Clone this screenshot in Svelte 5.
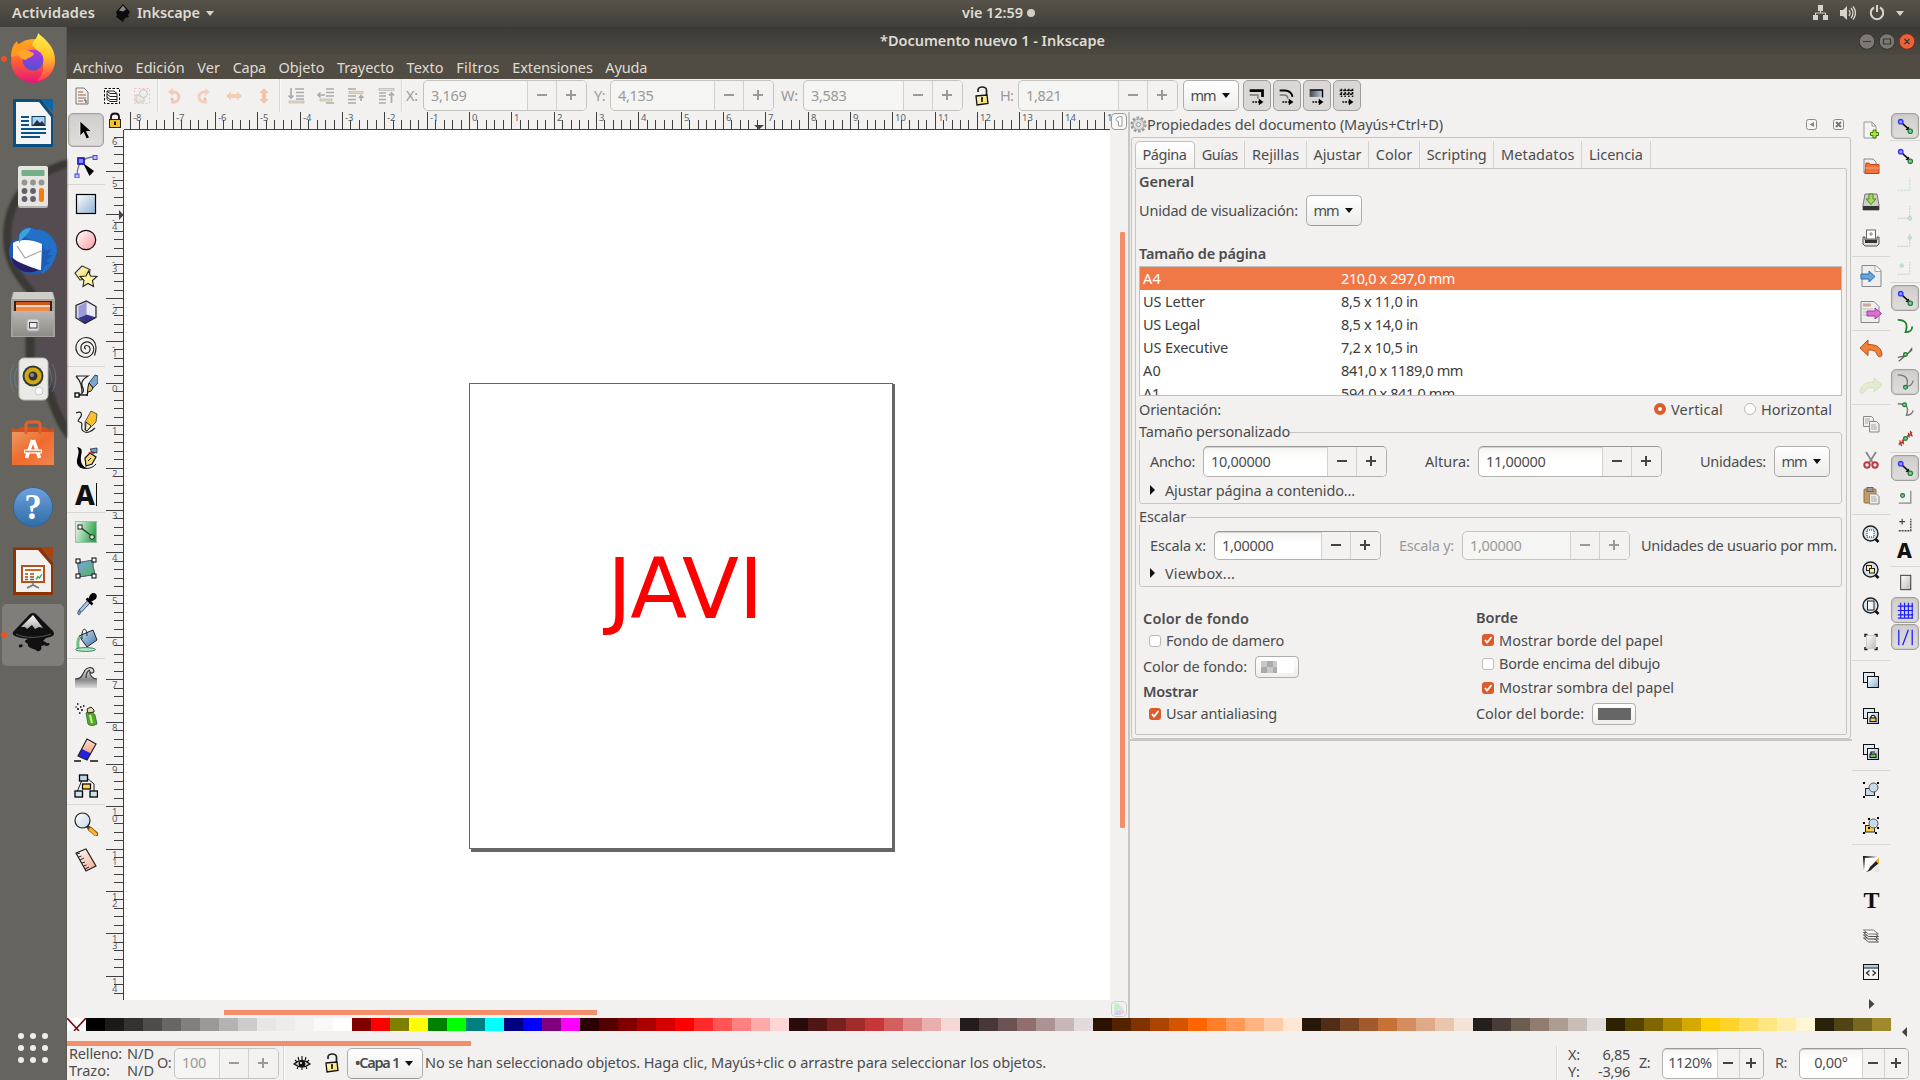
<script>
  function fit(node, width) {
    const natural = node.getBoundingClientRect().width;
    const count = [...node.textContent].length;
    node.style.letterSpacing = (width - natural) / count + 'px';
    node.style.width = width + 'px';
  }

  const menus = [['Archivo', 50], ['Edición', 49], ['Ver', 23], ['Capa', 33], ['Objeto', 46], ['Trayecto', 57], ['Texto', 37], ['Filtros', 43.5], ['Extensiones', 80.5], ['Ayuda', 42]];
  const tabs = [['Guías', 36], ['Rejillas', 47], ['Ajustar', 48], ['Color', 36.5], ['Scripting', 60], ['Metadatos', 73.5], ['Licencia', 54]];
  const sizes = [
    ['A4', 18, '210,0 x 297,0 mm', 114], ['US Letter', 62, '8,5 x 11,0 in', 77], ['US Legal', 57, '8,5 x 14,0 in', 77],
    ['US Executive', 85, '7,2 x 10,5 in', 77], ['A0', 18, '841,0 x 1189,0 mm', 122], ['A1', 17, '594,0 x 841,0 mm', 114]
  ];
  const palette = ('000000 1a1a1a 333333 4d4d4d 666666 808080 999999 b3b3b3 cccccc e6e6e6 ececec f2f2f2 f9f9f9 ffffff ' +
    '800000 ff0000 808000 ffff00 008000 00ff00 008080 00ffff 000080 0000ff 800080 ff00ff ' +
    '2b0000 550000 800000 aa0000 d40000 ff0000 ff2a2a ff5555 ff8080 ffaaaa ffd5d5 ' +
    '280b0b 501616 782121 a02c2c c83737 d35f5f de8787 e9afaf f4d7d7 241c1c 483737 6c5353 916f6f ac9393 c8b7b7 e3dbdb ' +
    '2b1100 552200 803300 aa4400 d45500 ff6600 ff7f2a ff9955 ffb380 ffccaa ffe6d5 ' +
    '28170b 502d16 784421 a05a2c c87137 d38d5f deaa87 e9c6af f4e3d7 241f1c 483e37 6c5d53 917c6f ac9d93 c8beb7 e3dedb ' +
    '2b2200 554400 806600 aa8800 d4aa00 ffcc00 ffd42a ffdd55 ffe680 ffeeaa fff6d5 28220b 504416 786721 a0892c').split(' ');

  const unit = 42.33;
  const hTicks = [];
  for (let i = -40; i <= 75; i++) hTicks.push({ x: Math.round(469 + (i * unit) / 5) + 0.5, major: i % 5 === 0, n: i === 75 ? '1' : i / 5 });
  const vTicks = [];
  for (let i = -29; i <= 72; i++) vTicks.push({ y: Math.round(383 + (i * unit) / 5) + 0.5, major: i % 5 === 0, n: i / 5 });

  const padlockOpen = '<path d="M8 8V6c.5-4 8-4 8.500 0V12" fill="none" stroke="#222" stroke-width="1.700"/><path d="M6 12l11-1 1 8.500-11 1.500z" fill="url(#gYel)" stroke="#111" stroke-width="1.300"/><path d="M12 14v4M11 14h2" stroke="#111" stroke-width="1.600"/>';
  const lens = '<circle cx="11.500" cy="11.500" r="7.500" fill="#d5e3ef" stroke="#222" stroke-width="1.400"/><path d="M16.500 17l3 3" stroke="#111" stroke-width="2.600"/>';
  const link = '<path d="M9 9l6 5.500" stroke="#111" stroke-width="1.600"/><path d="M16.500 16.500l-4.500-1 3.500-3.500z" fill="#111"/><circle cx="7" cy="7" r="2.300" fill="#99f" stroke="#33f" stroke-width="1.400"/><circle cx="17" cy="17" r="2.300" fill="#8c8" stroke="#2a8040" stroke-width="1.300"/>';
  const dup = '<rect x="4.500" y="4.500" width="11" height="10" fill="#dfeaf5" stroke="#111"/><rect x="8.500" y="8.500" width="11" height="11" fill="url(#gBlue)" stroke="#111"/>';
  const node = (x, y) => `<circle cx="${x}" cy="${y}" r="2" fill="#7c9" stroke="#1d7a2c" stroke-width="1.200"/>`;
  const toNext = '<path d="M7 18.500h7" stroke="#000" stroke-width="1.800" stroke-dasharray="2 1"/><path d="M14 15l5 3.500-5 3.500z"/>';

  const icons = {
    doc: '<path d="M6 4h8l4 4v12H6z" fill="#eee" stroke="#777"/><path d="M8 8h5M8 11h8M8 14h8M8 17h5" stroke="#c9a898" stroke-width="1.800"/><path d="M14 16h2v3" fill="none" stroke="#543"/>',
    layersel: '<rect x="4.500" y="4.500" width="15" height="15" fill="#fff" stroke="#000" stroke-dasharray="2.500 1.500"/><path d="M7 7h7l3 2.500h-7zM7 10l3 2.500h7M7 13l3 2.500h7M7 15.500l3 2h7M7 7v8.500M17 9.500v8" fill="none" stroke="#222"/>',
    groupsel: '<g opacity=".5"><rect x="4.500" y="4.500" width="15" height="15" fill="none" stroke="#e88" stroke-dasharray="2 2"/><rect x="6" y="11" width="8" height="7" fill="#e9dfc0" stroke="#999"/><circle cx="13.500" cy="9.500" r="4" fill="#e4e9ee" stroke="#999"/></g>',
    rotl: '<path d="M8 8h4a5 5 0 010 10H9" fill="none" stroke="#f0c9b8" stroke-width="3"/><path d="M6 8l5-4v8z" fill="#f0cdbd"/><circle cx="10" cy="15" r="1.500" fill="#eeb8a0"/>',
    rotr: '<path d="M16 8h-4a5 5 0 000 10h3" fill="none" stroke="#f1cfb8" stroke-width="3"/><path d="M18 8l-5-4v8z" fill="#f0d2bd"/><circle cx="13" cy="15" r="1.500" fill="#eeb8a0"/>',
    fliph: '<path d="M4 12l5-4.500v2.500h6V7.500l5 4.500-5 4.500V14H9v2.500z" fill="#f3cdb6"/>',
    flipv: '<path d="M12 4l4.500 5H14v6h2.500L12 20l-4.500-5H10V9H7.500z" fill="#f1c4aa"/>',
    low1: '<path d="M7 4v10M4.500 11.500L7 14l2.500-2.500M11 5h9M12 8.500h8M12 12h8M12 15h8" fill="none" stroke="#aaa" stroke-width="1.700"/><rect x="5" y="17" width="15" height="2" fill="#e9dfb8" stroke="#aaa" stroke-width=".6"/>',
    low2: '<path d="M12 5h8M12 8.500h8M12 12h8M12 19h8M4 11h7M6.500 8.500L4 11l2.500 2.500" fill="none" stroke="#aaa" stroke-width="1.700"/><rect x="6" y="15" width="12" height="2" fill="#e9dfb8" stroke="#aaa" stroke-width=".6"/>',
    up1: '<path d="M4 5h8M4 12h8M4 15.500h8M4 19h8M17 17v-5M15 14L17 11.500 19.500 14" fill="none" stroke="#aaa" stroke-width="1.700"/><rect x="5" y="7.500" width="14" height="2" fill="#e9dfb8" stroke="#aaa" stroke-width=".6"/>',
    up2: '<path d="M5 9h7M5 12h7M5 15.500h7M5 19h7M17.500 19V9M15 11.500L17.500 9l2.500 2.500" fill="none" stroke="#aaa" stroke-width="1.700"/><rect x="5" y="4.500" width="15" height="2" fill="#e9dfb8" stroke="#aaa" stroke-width=".6"/>',
    lockopen: padlockOpen,
    aff1: '<path d="M4 6h14v7" fill="none" stroke="#000" stroke-width="3"/><path d="M4 11h9v4" fill="none" stroke="#777" stroke-width="1.600"/>' + toNext,
    aff2: '<path d="M4 6h6a8 8 0 018 7" fill="none" stroke="#000" stroke-width="2"/><path d="M4 11h4q5 0 5 4" fill="none" stroke="#777" stroke-width="1.600"/>' + toNext,
    aff3: '<path d="M4 6h14v7H4z" fill="url(#gGrad)"/><path d="M4 5.500h14v8" fill="none" stroke="#000" stroke-width="1.500"/>' + toNext,
    aff4: '<path d="M4 6h15M4 10h15M6 4v9M10 4v9M14 4v9M18 4v9" stroke="#111" stroke-width="1.700" stroke-dasharray="2.500 1.200"/>' + toNext,

    select: '<path d="M6 3v15l3.500-3.500 3 6.500 3-1.500-3-6h5z" fill="#000" stroke="#fff" stroke-width=".7"/>',
    nodes: '<path d="M3 22C3 10 8 3 21 3" fill="none" stroke="#777" stroke-width="1.300"/><path d="M9 9l11 8-4.500 5z"/><rect x="4" y="4" width="6" height="6" fill="#88f" stroke="#11b" stroke-width="1.600"/><rect x="19" y="1.500" width="4" height="4" fill="#bbf" stroke="#44e"/><rect x="1" y="20" width="4" height="4" fill="#bbf" stroke="#44e"/>',
    rect: '<rect x="2.500" y="2.500" width="19" height="19" fill="url(#gBlue)" stroke="#000" stroke-width="1.200"/>',
    circle: '<circle cx="12" cy="12" r="9.700" fill="url(#gPink)" stroke="#111" stroke-width="1.200"/>',
    star: '<path d="M8 2l8 3.500-1 9-9 1.500L1 9z" fill="url(#gYel)" stroke="#333" stroke-width="1.100"/><path d="M14.500 7l2 5 6.500.5-4.500 4 1 6-5.500-3-5 3 1-6-4-4 6-.5z" fill="#fff3a0" stroke="#222" stroke-width="1.100"/>',
    box: '<path d="M12.500 1L22 6.500v11L11 23.500 2 18V5.500z" fill="#d8d8f2"/><path d="M12.500 3L21 7v10l-8.500-2.500z" fill="#ececfb"/><path d="M12.500 14.500L22 17.500 11 23.500 4 18z" fill="#33338a"/><path d="M4.500 6.500L12.500 2v12.500L4.500 18z" fill="#9b9bd6"/><path d="M12.500 1L22 6.500v11L11 23.500 2 18V5.500z" fill="none" stroke="#222" stroke-width="1.200"/>',
    spiral: '<path d="M12 13c-2 0-2-3.500.5-3.500s4 2 3.500 4.500-3 4-6 3-4-5-2.500-8 6-4 9-2 4 6 2.500 9.500-5.500 5.500-10 4.500-8-6-7-11S7 1.500 12 1.500c6 0 10 4.500 10 10 0 4-1 6.500-1.500 8" fill="none" stroke="#222" stroke-width="1.200"/>',
    pen: '<path d="M2 2h12c-5 3-8 6-5 12 1 3 1 5-4 7M2 2c5 6 6 10 6 18" fill="none" stroke="#222" stroke-width="1.200"/><path d="M15 9l6-8 3 1v7l-5 5z" fill="#7ba7cc" stroke="#124" stroke-width=".8"/><path d="M15 9l4 5-2 3-3 1-1 4 1-9z" fill="#e0c060" stroke="#111"/><rect x="1" y="19" width="4" height="4" fill="#fff" stroke="#000" stroke-width="1.300"/><path d="M5 21h8" stroke="#000" stroke-width="1.300"/>',
    pencil: '<path d="M2 3c6-3 7 2 3 6-3 4 3 2 3 5-2 8 4 9 7 8s4-2 6-4" fill="none" stroke="#222" stroke-width="1.200"/><path d="M17 1l6 3-1 8-9 9-2-1V12z" fill="#fbbf2d" stroke="#333" stroke-width=".8"/><path d="M12 12l5 4-4 5-1.500-1z" fill="#fff3c0" stroke="#222"/>',
    callig: '<path d="M3 1c6 1 5 4 4 9-1 7 2 11 6 12-6 2-11-2-10-8 1-5 3-9 0-13z"/><path d="M12 20l-1-8 5-5 6 4-4 7z" fill="#f5d868" stroke="#111" stroke-width="1.200"/><path d="M14 7l6 1 2-2-5-1z" fill="#d33"/><path d="M16 3l7-1v5l-5-1z" fill="#6e9cc4" stroke="#124" stroke-width=".7"/><path d="M14 15l3-3M7 21c5 3 12 1 15-3" stroke="#111" fill="none"/>',
    gradient: '<rect x="1.500" y="1.500" width="21" height="21" fill="url(#gGreen)" stroke="#9cbfa6"/><path d="M6 7l13 10" stroke="#333" stroke-width="1.300"/><rect x="4" y="5" width="4" height="4" fill="#fff" stroke="#222"/><circle cx="18" cy="17" r="2.300" fill="#cec" stroke="#222"/>',
    mesh: '<path d="M4 5c6 3 9-2 16 0-3 6 2 9 0 15-6-2-10 2-16 0 2-5-1-9 0-15z" fill="url(#gMesh)" stroke="#456"/><rect x="2" y="3" width="4" height="4" fill="#fff" stroke="#000"/><rect x="18" y="2" width="4" height="4" fill="#fff" stroke="#000"/><rect x="2" y="18" width="4" height="4" fill="#fff" stroke="#000"/><rect x="18" y="18" width="4" height="4" fill="#fff" stroke="#000"/>',
    dropper: '<path d="M5 18l8.500-9.500 2.500 2.500-8.500 9z" fill="#a9c4dd" stroke="#246" stroke-width=".9"/><path d="M12.500 6.500l6 6" stroke="#000" stroke-width="2.500"/><path d="M14 8c2-7 5-8 8-6 2 3 0 6-6 8z"/><path d="M5 18c-3 4 0 6 1 4s0-3-1-4z" fill="#79b" stroke="#357" stroke-width=".8"/>',
    bucket: '<path d="M5 8L19 2l4 10-10 7z" fill="url(#gBlue2)" stroke="#223"/><path d="M6 9c-3 2-2 7-2 11" fill="none" stroke="#6fbf7f" stroke-width="3"/><path d="M8 11c-1-12 5-13 5-3" fill="none" stroke="#222"/><ellipse cx="11.500" cy="21.500" rx="10" ry="1.900" fill="#b5e6bc" stroke="#386"/>',
    tweak: '<path d="M1 13c6 0 7-3 9-7 2-5 9-6 10-1 0 2-3 3-4 1-1 3 3 7 7 7v9H1z" fill="url(#gDark)"/><path d="M1 13c6 0 7-3 9-7 2-5 9-6 10-1 0 2-3 3-4 1-1 3 3 7 7 7M12 12c0-6 2-7 4-8" stroke="#333" fill="none" stroke-width="1.200"/>',
    spray: '<path d="M12 11c3-3 7-1 9 2l2 9c-4 2-7 2-9 0z" fill="#59a822" stroke="#264" stroke-width=".8"/><path d="M16 13l2 8" stroke="#c6eca0" stroke-width="2"/><path d="M13 7l4-2 3 3v2l-6 1z" fill="#e8d9a0" stroke="#222"/><path d="M3 2h1.500M6 5h1.500M3 7h2M7 8h2M5 11h1.500M9 4h1.500M1.500 5h1" stroke="#000" stroke-width="1.700"/>',
    eraser: '<path d="M13 1l9 5-9 16-9-4z" fill="url(#gSkin)"/><path d="M8 11l9 4.500L13 22l-9-4z" fill="#2222e0"/><path d="M13 1l9 5-9 16-9-4z" fill="none" stroke="#222" stroke-width="1.200"/><path d="M0 23h7M16 23h8" stroke="#111" stroke-width="1.300"/>',
    connector: '<path d="M8 6L3 18M13 4l7 6v8" stroke="#222" fill="none"/><rect x="5.500" y="1" width="8" height="6" fill="#bcd3e8" stroke="#000" stroke-width="1.300"/><rect x="8.500" y="10" width="8" height="5" fill="#ffd84a" stroke="#000" stroke-width="1.200"/><rect x="1" y="17" width="7.500" height="6" fill="#d0e2f2" stroke="#000" stroke-width="1.300"/><rect x="16" y="17" width="7.500" height="6" fill="#d0e2f2" stroke="#000" stroke-width="1.300"/>',
    zoom: '<path d="M13 14l3 3" stroke="#333" stroke-width="3"/><path d="M16 17l6 5" stroke="#7a4a00" stroke-width="4.600" stroke-linecap="round"/><path d="M16.500 17.500l5 4.500" stroke="#fbb52c" stroke-width="3.200" stroke-linecap="round"/><circle cx="8.500" cy="8.500" r="7.500" fill="url(#gLens)" stroke="#222" stroke-width="1.200"/>',
    measure: '<path d="M2 5l10-4 10 17-10 5z" fill="url(#gSkin2)" stroke="#222" stroke-width="1.200"/><path d="M3 6l3-1M4.500 9l3-1M6 12l4-2M8 15l3-1M9.500 18l3-1M11 21l4-2" stroke="#222"/>',

    new: '<path d="M5 4h8l4 4v12H5z" fill="#f4f4f4" stroke="#999"/><path d="M13 4v4h4" fill="none" stroke="#999"/><path d="M14 12h3v2.500h2.500v3H17V20h-3v-2.500h-2.500v-3H14z" fill="#a8e83e" stroke="#3f7d0d"/>',
    open: '<path d="M5 5h9l3 3v11H5z" fill="#eee" stroke="#888"/><path d="M7 9h3l1 1.500h9V19.500H6z" fill="#f0713a" stroke="#c0421a"/><path d="M6 14h14" stroke="#ffa77d"/>',
    save: '<path d="M6 4h12l2 11v5H4v-5z" fill="#ccc" stroke="#777"/><path d="M4 16h16v4H4z" fill="#333"/><path d="M10 4h4v5h3l-5 5.500L7 9h3z" fill="#a6d85a" stroke="#4e8a14"/>',
    print: '<rect x="7.500" y="4" width="9" height="9" fill="#fff" stroke="#666"/><path d="M12 6v4M10 8h4" stroke="#888"/><path d="M4 11h2v3h12v-3h2v7l-2 2H6l-2-2z" fill="#ddd" stroke="#555"/><path d="M6 14h12v3H6z" fill="#333"/>',
    import: '<path d="M3 1.500h14l5 5v16H3z" fill="#eee" stroke="#888"/><path d="M16 1.500v6h6" fill="#fff" stroke="#aaa"/><path d="M2 10h8V7l6 5.500-6 5.500v-3H2z" fill="#6aa5d8" stroke="#2a6cab"/>',
    export: '<path d="M2 1.500h13l5 5v16H2z" fill="#eee" stroke="#888"/><path d="M4 5h8" stroke="#c9a99a" stroke-width="3"/><path d="M4 9h10M4 12h5M4 15h4" stroke="#bbb"/><path d="M8 11h8V8l6.500 5.500L16 19v-3H8z" fill="#da70d0" stroke="#a43a9c"/>',
    undo: '<path d="M1 10l8-8v4.500c9 0 13 3 14 10 0 3-4 3-5 0-1-4-4-4.500-9-4.500v5.500z" fill="#f08238" stroke="#b84a12"/>',
    redo: '<path d="M23 11l-8-7v4c-9 0-12 3-14 9 0 3 4 3 5 0 1-3 4-3.500 9-3.500V18z" fill="#e3ecd0" stroke="#d3e0bc"/>',
    copy: '<path d="M4.500 4.500h8l2 2v8h-10z" fill="#eee" stroke="#888"/><path d="M10.500 9.500h7l2.500 2.500v8h-9.500z" fill="#eee" stroke="#888"/><path d="M6 7h5M6 9h5M6 11h3M12 13h5M12 15h6M12 17h6" stroke="#aaa"/>',
    cut: '<path d="M7 4l7 11M17 4l-7 11" stroke="#888" stroke-width="1.800"/><circle cx="8" cy="17" r="2.700" fill="none" stroke="#c03a44" stroke-width="2"/><circle cx="16" cy="17" r="2.700" fill="none" stroke="#c03a44" stroke-width="2"/>',
    paste: '<rect x="5" y="5" width="12" height="14" rx="1" fill="#c39a68" stroke="#957142"/><rect x="8" y="3.500" width="6" height="4" fill="#999" stroke="#666"/><path d="M10.500 10h7l2.500 2.500V20h-9.500z" fill="#eee" stroke="#888"/><path d="M12 13h5M12 15h6M12 17h6" stroke="#aaa"/>',
    zsel: lens + '<rect x="8" y="8" width="7" height="7" fill="#fff" stroke="#222" stroke-dasharray="1 1"/>',
    zdraw: lens + '<rect x="7.500" y="7.500" width="5" height="5" fill="#fe9" stroke="#222"/><rect x="10.500" y="10.500" width="5" height="4.500" fill="#fe9" stroke="#222"/>',
    zpage: lens + '<rect x="8.500" y="7" width="6.500" height="9" fill="#f4f4f4" stroke="#222"/>',
    zwidth: '<rect x="7.500" y="5.500" width="9" height="13" fill="url(#gGrey)" stroke="#ccc"/><path d="M6 7V4.500h2.500M15.500 4.500H18V7M6 17v2.500h2.500M15.500 19.500H18V17" fill="none" stroke="#222" stroke-width="1.500"/>',
    dup: dup,
    clone: dup + '<path d="M12 14v-1.500q2-2.500 4 0V14" fill="none" stroke="#111" stroke-width="1.200"/><rect x="11" y="14" width="6" height="3.500" fill="#fc4" stroke="#111"/>',
    unlink: dup + '<path d="M12 14v-2h4" fill="none" stroke="#111" stroke-width="1.200"/><rect x="11" y="14" width="6" height="3.500" fill="#7b5" stroke="#111"/>',
    group: '<rect x="6.500" y="10.500" width="9" height="7" fill="#c9daea" stroke="#222"/><circle cx="14.500" cy="9.500" r="4.500" fill="#c9daea" stroke="#555"/><path d="M4 4h2v2H4zM18 4h2v2h-2zM4 18h2v2H4zM18 18h2v2h-2z"/>',
    ungroup: '<rect x="6.500" y="11.500" width="9" height="6.500" fill="#ffcf4a" stroke="#222"/><circle cx="14.500" cy="9.500" r="4.500" fill="#c9daea" stroke="#555"/><path d="M9 4h2v2H9zM18 3h2v2h-2zM4 8h2v2H4zM4 18h2v2H4zM16 18h2v2h-2zM18 13h2v2h-2zM9 13h2v2H9z"/>',
    fill: '<rect x="4" y="4" width="16" height="16" fill="url(#gDiag)"/><path d="M6 6h12l-9 9-3 4z" fill="#fff"/><path d="M4 20c4 0 6-2 7-5l8-8 1 4-6 5c-2 3-6 4-10 4z" fill="#222"/><path d="M17 9l3-4v8z" fill="#f5b22a"/>',
    layers: '<path d="M4.500 14h10l5 4h-10z" fill="#eee" stroke="#555"/><path d="M4.500 11h10l5 4h-10z" fill="#eee" stroke="#444"/><path d="M4.500 8.500h10l5 4h-10z" fill="#eee" stroke="#555"/><path d="M4.500 6h10l5 4h-10z" fill="#f8f8f8" stroke="#777"/>',
    xml: '<rect x="4.500" y="4.500" width="15" height="15" fill="#f4f4f4" stroke="#111"/><path d="M5 5h14v2.500H5z" fill="#b5cbe0"/><path d="M4.500 8h15" stroke="#111"/><path d="M10.500 10.500L7.500 13l3 2.500M13.500 10.500l3 2.500-3 2.500" fill="none" stroke="#222" stroke-width="1.200"/>',

    link: link,
    bb1: '<g opacity=".4"><path d="M4 18h12.500V5" fill="none" stroke="#6b9" stroke-dasharray="2 1"/></g>',
    bb2: '<g opacity=".4"><path d="M4 18h12.500V5" fill="none" stroke="#888" stroke-dasharray="2 1"/><circle cx="16.500" cy="18" r="2" fill="#8c9" stroke="#6a7"/></g>',
    bb3: '<g opacity=".4"><path d="M4 18h12.500V5" fill="none" stroke="#888" stroke-dasharray="2 1"/><circle cx="16.500" cy="9" r="1.800" fill="#8c9" stroke="#6a7"/></g>',
    bb4: '<g opacity=".4"><path d="M4 18h12.500V5" fill="none" stroke="#888" stroke-dasharray="2 1"/><circle cx="8" cy="9" r="1.800" fill="#8c9" stroke="#6a7"/></g>',
    curve: '<path d="M4 5c8 0 11 4 8 13 5 0 7-2 7-6" fill="none" stroke="#1d8028" stroke-width="1.800"/>',
    cross: '<path d="M4 15c7-1 11-3 15-10M5 19l14-12" fill="none" stroke="#666" stroke-width="1.400"/>' + node(12, 12),
    cusp: '<path d="M4 4c8 0 12 4 9 12 4 0 6-2 7-6" fill="none" stroke="#777" stroke-width="1.400"/>' + node(12, 17),
    smooth: '<path d="M4 5c9 0 12 3 9 12 4 0 6-2 7-5" fill="none" stroke="#777" stroke-width="1.400"/>' + node(11, 6),
    mid: '<path d="M5 19l14-14" stroke="#666" stroke-width="1.200"/><path d="M6 14l2 6M9 13l1 5M15 6l1 5M17 4l2 6M5 17l5-1M14 9l5-1" stroke="#c22" stroke-width="1.300"/>' + node(12, 12),
    obj: '<path d="M5 19h12.500V6" fill="none" stroke="#888" stroke-width="1.300"/>' + node(9, 11),
    rotc: '<path d="M5 18.500h12.500V6" fill="none" stroke="#444" stroke-width="1.500" stroke-dasharray="2 1"/><path d="M8.500 6v6M5.500 9h6" stroke="#444" stroke-width="1.200"/>',
    pageb: '<rect x="7" y="4.500" width="10.500" height="15" fill="url(#gGrey)" stroke="#333"/>',
    grid: '<path d="M4 7.500h16M4 12h16M4 16.500h16M7 4v16M11 4v16M15 4v16M19 4v16M4 20h16" stroke="#1a1aff" stroke-width="1.200"/>',
    guide: '<path d="M5 4v16M19 4v16M9 20l6-16" stroke="#1a1aff" stroke-width="1.300"/>'
  };

  const toolbox = ['select', 'nodes', '|', 'rect', 'circle', 'star', 'box', 'spiral', '|', 'pen', 'pencil', 'callig', 'A', '|', 'gradient', 'mesh', 'dropper', 'bucket', '|', 'tweak', 'spray', 'eraser', 'connector', '|', 'zoom', 'measure'];
  const commands = ['new', 'open', 'save', 'print', '|', 'import', 'export', '|', 'undo', 'redo', '|', 'copy', 'cut', 'paste', '|', 'zsel', 'zdraw', 'zpage', 'zwidth', '|', 'dup', 'clone', 'unlink', '|', 'group', 'ungroup', '|', 'fill', 'T', 'layers', 'xml'];
  const snaps = [['link', 1], ['|'], ['link'], ['bb1'], ['bb2'], ['bb3'], ['bb4'], ['|'], ['link', 1], ['curve'], ['cross'], ['cusp', 1], ['smooth'], ['mid'], ['|'], ['link', 1], ['obj'], ['rotc'], ['A'], ['|'], ['pageb'], ['grid', 1], ['guide', 1]];

  const apps = [
    '<circle cx="28" cy="30" r="22" fill="url(#ffA)"/><path d="M27 14c2-5 6-8 6-12 8 7 17 14 17 27 0 9-6 20-18 21 10-10 8-25-5-36z" fill="url(#ffB)"/><path d="M6 26c0-8 2-12 6-16 1 3 2 4 4 5 2 0 5-1 8 1-3 2-5 4-5 7z" fill="#ff9a1f"/><circle cx="28" cy="29" r="10.500" fill="url(#ffC)"/><path d="M13 21c6-5 12 0 16 1-1 5-6 4-8 7-5-1-8-4-8-8z" fill="#ffa62b"/>',
    '<path d="M8 4h28l12 16v32H8z" fill="#0a4f82"/><path d="M11 7h23l12 15v27H11z" fill="#f5f5f5"/><path d="M16 22h8M16 26h8M16 30h8M16 34h25M16 38h25M16 42h19" stroke="#0a5488" stroke-width="2"/><rect x="27" y="21.500" width="13" height="9" fill="#a9d3ee" stroke="#06395e"/><path d="M28 30l4-5 3 3 2-2 3 4z" fill="#234"/><path d="M36 4h12v13z" fill="#0a68a8"/>',
    '<rect x="13" y="7" width="30" height="42" rx="2.500" fill="#b5b3ae"/><rect x="13" y="7" width="30" height="40" rx="2.500" fill="#e6e5e1"/><rect x="16.500" y="11" width="23" height="6" rx="1" fill="#73b087"/><g fill="#969690"><circle cx="19.500" cy="23.500" r="2.900"/><circle cx="28" cy="23.500" r="2.900"/><circle cx="36.500" cy="23.500" r="2.900"/></g><g fill="#61616a"><circle cx="19.500" cy="32" r="2.900"/><circle cx="28" cy="32" r="2.900"/><circle cx="19.500" cy="40" r="2.900"/><circle cx="28" cy="40" r="2.900"/></g><rect x="34" y="29" width="5" height="14" rx="2.500" fill="#f57c0a"/>',
    '<path d="M14 12C18 3 26 3 31 7c10-2 21 9 21 21-1 11-8 20-18 23-16 3-30-9-30-23 0-5 3-10 5-12l3 2z" fill="#1c5cb8"/><path d="M14 12C18 3 26 3 31 7c10-2 21 9 21 21-2 11-8 20-16 23 6-10 8-20 1-30z" fill="#2370c8"/><path d="M8 20c8-5 20-3 29 1l-1 26C22 47 12 41 8 35z" fill="#fff"/><path d="M12 23l8 12 16-7" fill="none" stroke="#aaa" stroke-width="1.300"/><path d="M14 16c0-7 5-11 12-11-2 6-7 8-12 15z" fill="#3fa0da"/><path d="M6 34c7 6 18 9 28 13-12 6-26 0-28-13z" fill="#281f68"/><path d="M37 28l10-2-5 6 6 0-7 6 4 2-8 4z" fill="#1b5cb4"/>',
    '<path d="M8 5h40l2 7v38H6V12z" fill="#a5a39e"/><path d="M9 5h38l2 7H7z" fill="#cfcdc8"/><rect x="9" y="14" width="38" height="13" fill="#3a2015"/><path d="M11 15h34v4H11z" fill="#d2531d"/><path d="M11 18h34v2H11z" fill="#f2d9c0"/><path d="M11 20h34v4H11z" fill="#f08a46"/><path d="M7 24h42l-1 25H8z" fill="url(#gSteel)"/><rect x="22" y="32" width="12" height="12" rx="2" fill="#ddd" stroke="#aaa"/><rect x="24.500" y="35.500" width="7.500" height="5.500" fill="#eee" stroke="#444"/>',
    '<g fill="none" stroke="#6485a5" opacity=".65"><path d="M9 13c-5 8-5 20 0 28M47 13c5 8 5 20 0 28M12 17c-3 7-3 14 0 20M44 17c3 7 3 14 0 20"/></g><rect x="14" y="7" width="29" height="42" rx="5" fill="#e9e9e6" stroke="#bbb"/><circle cx="28" cy="25" r="10.500" fill="#3b3b30"/><circle cx="28" cy="25" r="8.500" fill="#cfa915"/><circle cx="28" cy="25" r="4.500" fill="#333"/><circle cx="27" cy="24" r="2" fill="#889"/><circle cx="34" cy="40" r="4" fill="#f6f6f6" stroke="#ccc"/>',
    '<path d="M7 16h42v34H7z" fill="url(#gBag)"/><path d="M7 12l4 3 5-3h24l5 3 4-3v5H7z" fill="#d1511c"/><path d="M21 19v-9q0-3 3-3h8q3 0 3 3v9" fill="none" stroke="#e5602b" stroke-width="3"/><path d="M27.500 25l-6 18M28.500 25l6 18" stroke="#fff" stroke-width="3.600"/><path d="M19 36.500h18" stroke="#fff" stroke-width="4"/><path d="M20 36.500h16" stroke="#ee7a40" stroke-width="1.500"/>',
    '<circle cx="28" cy="28" r="19.500" fill="url(#gHelp)" stroke="#30649d"/>',
    '<path d="M8 4.500h28l12 15V52H8z" fill="#8e3305"/><path d="M11 7h22l13 15v27H11z" fill="#f3f1ef"/><path d="M36 4h12v13z" fill="#a9430d"/><rect x="17" y="23" width="22" height="16" fill="#fff" stroke="#b2531c" stroke-width="2"/><path d="M20 27h16" stroke="#d7651e" stroke-width="2"/><path d="M20 31h3M20 34h3M20 36.500h3M25 31h4M25 34h4M25 36.500h4" stroke="#a34a18" stroke-width="1.500"/><path d="M31 36.500l2-3 1.500 1.500 2.500-4" fill="none" stroke="#3a4" stroke-width="1.400"/><path d="M28 39v4M22 45l6-3 6 3" fill="none" stroke="#777" stroke-width="1.600"/>',
    '<path d="M28 6c2 0 3 1 4 2l16 16c3 4-1 6-7 7l-3 3c6 2 5 4-2 5 2 4-3 7-5 4-5-2-9-3-8-6-3-2-5-3 0-5-6-1-17-2-15-7L24 8c1-1 2-2 4-2z" fill="#111"/><path d="M28 8L16 20l4 0 2 2 5-4 3 4 4-2 4 1z" fill="url(#gSnow)"/><path d="M11 27c10 5 24 4 35 0" stroke="#555" fill="none"/><path d="M14 38c3-2 5 0 3 2-2 1-4 0-3-2zM40 37c3-2 6-1 4 1s-5 1-4-1z" fill="#111"/>'
  ];
</script>

{#snippet ic(name, size = 24)}
  {#if name === 'A'}
    <span class="glyphA" class:small={size < 24}>A</span>
  {:else if name === 'T'}
    <span class="glyphT">T</span>
  {:else}
    <svg class="ic" width={size} height={size} viewBox="0 0 24 24">{@html icons[name]}</svg>
  {/if}
{/snippet}

{#snippet spin(value, cls, off = false)}
  <div class="spin {cls}" class:off>
    <span class="val">{value}</span>
    <span class="btn"><i class="minus"></i></span>
    <span class="btn"><i class="minus"></i><i class="bar"></i></span>
  </div>
{/snippet}

{#snippet check(label, w, on = false)}
  <div class="check">
    <span class="tick" class:on>{#if on}<svg width="12" height="12" viewBox="0 0 12 12"><path d="M3 6l2 2.500L9.500 3" fill="none" stroke="#fff" stroke-width="1.800" /></svg>{/if}</span>
    <span class="t" use:fit={w}>{label}</span>
  </div>
{/snippet}

<svg class="defs" width="0" height="0">
  <defs>
    <linearGradient id="gBlue" x2="1" y2="1"><stop stop-color="#fff" /><stop offset="1" stop-color="#8fb1d2" /></linearGradient>
    <linearGradient id="gLens" x2="1" y2="1"><stop stop-color="#fff" /><stop offset="1" stop-color="#c3d6ea" /></linearGradient>
    <linearGradient id="gBlue2" x2="1" y2="1"><stop stop-color="#cfe2f0" /><stop offset="1" stop-color="#3f78a8" /></linearGradient>
    <linearGradient id="gPink" x2="1" y2="1"><stop stop-color="#fff" /><stop offset="1" stop-color="#fb9aa4" /></linearGradient>
    <linearGradient id="gYel" x2="1" y2="1"><stop stop-color="#fffbe0" /><stop offset="1" stop-color="#f3d849" /></linearGradient>
    <linearGradient id="gGreen" x2="1" y2="0.300"><stop stop-color="#f3faf4" /><stop offset="1" stop-color="#33a650" /></linearGradient>
    <linearGradient id="gMesh" x2="1" y2="1"><stop stop-color="#77a8dd" /><stop offset="1" stop-color="#55ae62" /></linearGradient>
    <linearGradient id="gDark" x2="0" y2="1"><stop stop-color="#eee" /><stop offset=".6" stop-color="#888" /><stop offset="1" stop-color="#ddd" /></linearGradient>
    <linearGradient id="gSkin" x2="0" y2="1"><stop stop-color="#fbe3d8" /><stop offset="1" stop-color="#e9835b" /></linearGradient>
    <linearGradient id="gSkin2" x2="1" y2="1"><stop stop-color="#fff" /><stop offset="1" stop-color="#f3a98c" /></linearGradient>
    <linearGradient id="gGrey" x2="1" y2="1"><stop stop-color="#fff" /><stop offset="1" stop-color="#bbb" /></linearGradient>
    <linearGradient id="gGrad"><stop stop-color="#444" /><stop offset="1" stop-color="#bcd3ee" /></linearGradient>
    <linearGradient id="gDiag" x2="1" y2="1"><stop stop-color="#000" /><stop offset=".5" stop-color="#fff" /><stop offset="1" stop-color="#ddd" /></linearGradient>
    <linearGradient id="gSnow" x2="0" y2="1"><stop stop-color="#fff" /><stop offset="1" stop-color="#aaa" /></linearGradient>
    <linearGradient id="gSteel" x2="0" y2="1"><stop stop-color="#b9b7b3" /><stop offset="1" stop-color="#8e8c88" /></linearGradient>
    <linearGradient id="gBag" x2="1" y2="1"><stop stop-color="#ea9c63" /><stop offset=".5" stop-color="#f06a2d" /><stop offset="1" stop-color="#ef8652" /></linearGradient>
    <linearGradient id="gHelp" x2="0" y2="1"><stop stop-color="#71a1dd" /><stop offset="1" stop-color="#2e6da6" /></linearGradient>
    <linearGradient id="ffA" x2="0" y2="1"><stop stop-color="#ffb01f" /><stop offset=".5" stop-color="#ff6133" /><stop offset="1" stop-color="#e5147c" /></linearGradient>
    <linearGradient id="ffB" x2="0" y2="1"><stop stop-color="#fff04a" /><stop offset=".5" stop-color="#ffc02a" /><stop offset="1" stop-color="#ff3a4f" /></linearGradient>
    <linearGradient id="ffC" x2="0" y2="1"><stop stop-color="#b833e1" /><stop offset="1" stop-color="#4a55d4" /></linearGradient>
  </defs>
</svg>

<div class="desktop">
  <header class="topbar">
    <span class="t act" use:fit={83}>Actividades</span>
    <svg class="mini" width="16" height="18" viewBox="0 0 16 18"><path d="M8 0l7 8-2 3 1 2-4 1-2 4-4-3-3-2 1-2-1-3z" fill="#0c0c0c" /><path d="M8 1.500L4 6.500l4 1 3-2z" fill="#888" /></svg>
    <span class="t" use:fit={63}>Inkscape</span>
    <i class="down light"></i>
    <div class="clock"><span class="t" use:fit={61}>vie 12:59</span><i class="dot"></i></div>
    <div class="tray">
      <svg width="15" height="16" viewBox="0 0 15 16"><path d="M5 0h5v6H5zM0 10h5v5H0zM10 10h5v5h-5z" fill="#d6d3cd" /><path d="M7.500 6v2M2.500 10V8h10v2" fill="none" stroke="#d6d3cd" /></svg>
      <svg width="16" height="16" viewBox="0 0 16 16"><path d="M0 5h3l4-4v14l-4-4H0z" fill="#d6d3cd" /><path d="M9 5q2 3 0 6M11 3q4 5 0 10M13 1.500q5 6.500 0 13" fill="none" stroke="#d6d3cd" stroke-width="1.300" /></svg>
      <svg width="16" height="16" viewBox="0 0 16 16"><path d="M5 2.500a6.200 6.200 0 106 0M8 0v7" fill="none" stroke="#d6d3cd" stroke-width="2" /></svg>
      <i class="down light"></i>
    </div>
  </header>

  <div class="main">
    <nav class="dock">
      <svg class="wall" width="67" height="1053" viewBox="0 27 67 1053">
        <path d="M72 164C28 176 8 200 8 238c0 26 14 44 26 58v64c8 8 18 20 38 80z" fill="#544c50" />
        <path d="M72 162C28 174 7 200 7 238c0 26 14 42 26 56" fill="none" stroke="#3b3935" stroke-width="8" />
        <path d="M30 330v36M42 372c6 14 14 48 30 66" fill="none" stroke="#3b3935" stroke-width="9" />
      </svg>
      {#each apps as app, i}
        <div class="app" class:current={i === 9}>
          {#if i === 0 || i === 9}<i class="run"></i>{/if}
          <svg width="56" height="56" viewBox="0 0 56 56">{@html app}{#if i === 7}<text x="28" y="40" class="q">?</text>{/if}</svg>
        </div>
      {/each}
      <div class="launcher">{#each Array(9) as _}<i></i>{/each}</div>
    </nav>

    <section class="window">
      <div class="title">
        <span class="t" use:fit={225}>*Documento nuevo 1 - Inkscape</span>
        <div class="wbtns">
          <svg width="56" height="17" viewBox="0 0 56 17"><circle cx="8" cy="8.500" r="7.800" fill="#7b7972" stroke="#34322e" /><circle cx="28" cy="8.500" r="7.800" fill="#7b7972" stroke="#34322e" /><circle cx="48" cy="8.500" r="7.800" fill="#ec6139" stroke="#7a2e14" /><path d="M4 8.500h8M24.500 6h7v5h-7zM45.500 6l5 5M50.500 6l-5 5" fill="none" stroke="#38362f" stroke-width="1.200" /></svg>
        </div>
      </div>
      <div class="menubar">{#each menus as [m, w]}<span class="t" use:fit={w}>{m}</span>{/each}</div>

      <div class="toolbar">
        {#each ['doc', 'layersel', 'groupsel', '|', 'rotl', 'rotr', 'fliph', 'flipv', '|', 'low1', 'low2', 'up1', 'up2', '|'] as n}
          {#if n === '|'}<i class="vsep"></i>{:else}<span class="cell30">{@render ic(n)}</span>{/if}
        {/each}
        <span class="t lab x" use:fit={12}>X:</span>{@render spin('3,169', 'w164', true)}
        <span class="t lab" use:fit={11}>Y:</span>{@render spin('4,135', 'w164', true)}
        <span class="t lab" use:fit={17}>W:</span>{@render spin('3,583', 'w160', true)}
        <span class="lk">{@render ic('lockopen')}</span>
        <span class="t lab h" use:fit={13}>H:</span>{@render spin('1,821', 'w160', true)}
        <button class="combo"><span class="t" use:fit={25}>mm</span><i class="down"></i></button>
        <div class="toggles">{#each ['aff1', 'aff2', 'aff3', 'aff4'] as n}<span class="toggle">{@render ic(n, 22)}</span>{/each}</div>
      </div>

      <div class="body">
        <div class="toolbox">
          {#each toolbox as n, i}
            {#if n === '|'}<i class="hsep"></i>{:else}<span class="tool" class:pressed={i === 0}>{@render ic(n)}</span>{/if}
          {/each}
        </div>

        <div class="workspace">
          <svg class="canvas" width="1005" height="888" viewBox="105 112 1005 888">
            <rect x="124" y="130" width="986" height="870" fill="#fff" />
            <g class="ruler">
              {#each hTicks as k}
                <path d="M{k.x} {k.major ? 112 : 120}V129" />
                {#if k.major}<text x={k.x + 2.500} y="121">{k.n}</text>{/if}
              {/each}
              {#each vTicks as k}
                <path d="M{k.major ? 106 : 114} {k.y}H123" />
                {#if k.major}{#each [...String(k.n)] as c, j}<text x="112" y={k.y + 8.500 + j * 7}>{c}</text>{/each}{/if}
              {/each}
              <text x="112" y="145">6</text>
              <path d="M124 129.500H1110M123.500 130V1000" />
              <path class="mark" d="M754 125h10l-5 4.500zM119 210v10l4.500-5z" />
            </g>
            <rect x="105" y="112" width="18.500" height="17" class="corner" />
            <path d="M111 120v-3q0-3.500 4-3.500t4 3.500v3" fill="none" stroke="#111" stroke-width="1.800" />
            <rect x="109.500" y="119.500" width="11" height="8" fill="#f6bf2c" stroke="#222" /><path d="M115 121.500v3.500" stroke="#111" stroke-width="2" />
            <path d="M471 384H895V852H471z" fill="#666" />
            <rect x="469.500" y="383.500" width="423" height="465" fill="#fff" stroke="#666" />
            <text class="javi" x="607.300" y="618.200">JAVI</text>
          </svg>
          <div class="vscroll"><span class="pbtn"><svg width="8" height="11" viewBox="0 0 8 11"><path d="M3.500 5.500Q0 5 1.500 2 3 .5 7 .500V10H3.500z" fill="#fff" stroke="#999" /></svg></span><i></i></div>
          <div class="hscroll"><i></i></div>
          <div class="cms"><svg width="14" height="14" viewBox="0 0 14 14"><path d="M2 1q9 1 11 10l-4 2H2z" fill="#cfe8d4" /><path d="M2 1q4 0 6 3L5 9z" fill="#b5f0bd" /><path d="M7 8l6 2-4 3-4-1z" fill="#f3bfe6" /><path d="M2 13l3-5 3 5z" fill="#bcc8f8" /></svg></div>
        </div>

        <div class="panel">
          <div class="phead">
            <svg width="17" height="17" viewBox="0 0 17 17"><circle cx="8.500" cy="8.500" r="7" fill="none" stroke="#999" stroke-width="2.200" stroke-dasharray="2.700 1.700" /><circle cx="8.500" cy="8.500" r="5.500" fill="#ddd" stroke="#999" /><circle cx="8.500" cy="8.500" r="2" fill="#eee" stroke="#999" /></svg>
            <span class="t" use:fit={296}>Propiedades del documento (Mayús+Ctrl+D)</span>
            <svg class="pctl" width="38" height="12" viewBox="0 0 38 12"><rect x=".5" y=".5" width="10" height="10" rx="2" fill="#f6f6f5" stroke="#888" /><path d="M8 3v5L3.500 5.500z" fill="#888" /><rect x="27.500" y=".5" width="10" height="10" rx="2" fill="#f6f6f5" stroke="#888" /><path d="M30 3l5 5M35 3l-5 5" stroke="#777" stroke-width="2" /></svg>
          </div>
          <div class="outer">
            <div class="tabs">
              <span class="tab on"><span class="t" use:fit={44}>Página</span></span>
              {#each tabs as [t, w]}<span class="tab"><span class="t" use:fit={w}>{t}</span></span>{/each}
            </div>
            <div class="sheet">
              <div class="r26"><b class="t" use:fit={55}>General</b></div>
              <div class="r31"><span class="t" use:fit={159}>Unidad de visualización:</span><button class="combo"><span class="t" use:fit={25}>mm</span><i class="down"></i></button></div>
              <div class="r40"><b class="t" use:fit={127}>Tamaño de página</b></div>
              <div class="list">
                {#each sizes as [a, aw, b, bw], i}
                  <div class="lrow" class:sel={i === 0}><span class="cellt"><span class="t" use:fit={aw}>{a}</span></span><span class="cellt"><span class="t" use:fit={bw}>{b}</span></span></div>
                {/each}
              </div>
              <div class="orient">
                <span class="t" use:fit={82}>Orientación:</span>
                <i class="radio on"></i><span class="t" use:fit={52}>Vertical</span>
                <i class="radio"></i><span class="t" use:fit={71}>Horizontal</span>
              </div>
              <fieldset>
                <legend><span class="t" use:fit={151}>Tamaño personalizado</span></legend>
                <div class="frow">
                  <span class="t" use:fit={45}>Ancho:</span>{@render spin('10,00000', 'w184')}
                  <span class="t g38" use:fit={45}>Altura:</span>{@render spin('11,00000', 'w184')}
                  <span class="t g38" use:fit={66}>Unidades:</span><button class="combo"><span class="t" use:fit={25}>mm</span><i class="down"></i></button>
                </div>
                <div class="exp"><i></i><span class="t" use:fit={190}>Ajustar página a contenido...</span></div>
              </fieldset>
              <fieldset class="second">
                <legend><span class="t" use:fit={47}>Escalar</span></legend>
                <div class="frow low">
                  <span class="t" use:fit={56}>Escala x:</span>{@render spin('1,00000', 'w167')}
                  <span class="t g18 dim" use:fit={55}>Escala y:</span>{@render spin('1,00000', 'w168', true)}
                  <span class="t g11" use:fit={196}>Unidades de usuario por mm.</span>
                </div>
                <div class="exp"><i></i><span class="t" use:fit={70}>Viewbox...</span></div>
              </fieldset>
              <div class="cols">
                <div class="left">
                  <div><b class="t" use:fit={106}>Color de fondo</b></div>
                  {@render check('Fondo de damero', 118)}
                  <div><span class="t" use:fit={104}>Color de fondo:</span><span class="swatch"><i class="chk"></i></span></div>
                  <div><b class="t" use:fit={55}>Mostrar</b></div>
                  {@render check('Usar antialiasing', 111, true)}
                </div>
                <div class="right">
                  <div><b class="t" use:fit={42}>Borde</b></div>
                  {@render check('Mostrar borde del papel', 164, true)}
                  {@render check('Borde encima del dibujo', 161)}
                  {@render check('Mostrar sombra del papel', 175, true)}
                  <div><span class="t" use:fit={108}>Color del borde:</span><span class="swatch"><i class="grey"></i></span></div>
                </div>
              </div>
            </div>
          </div>
          <div class="grip"></div>
        </div>

        <div class="commands">
          {#each commands as n}{#if n === '|'}<i class="hsep"></i>{:else}<span class="tool">{@render ic(n)}</span>{/if}{/each}
          <svg class="more" width="6" height="10" viewBox="0 0 6 10"><path d="M0 0l5.500 5L0 10z" fill="#444" /></svg>
        </div>
        <div class="snaps">
          {#each snaps as [n, on]}{#if n === '|'}<i class="hsep"></i>{:else}<span class="snap" class:pressed={on}>{@render ic(n, 23)}</span>{/if}{/each}
        </div>
      </div>

      <div class="palrow">
        <div class="palwrap">
          <div class="palette">
            <svg width="19" height="13" viewBox="0 0 19 13"><path d="M0 0h19v13H0z" fill="#fff" /><path d="M0 0l12 13M19 0L7 13" stroke="#7a0a0a" stroke-width="1.600" /></svg>
            {#each palette as c}<i style:background={'#' + c}></i>{/each}
          </div>
          <div class="pbar"></div>
        </div>
        <svg width="5" height="10" viewBox="0 0 5 10"><path d="M5 0L0 5l5 5z" fill="#444" /></svg>
      </div>

      <footer class="status">
        <div class="style">
          <span class="t" use:fit={53}>Relleno:</span><span class="t" use:fit={27}>N/D</span>
          <span class="t" use:fit={41}>Trazo:</span><span class="t" use:fit={27}>N/D</span>
        </div>
        <span class="t o" use:fit={14}>O:</span>
        {@render spin('100', 'w105', true)}
        <i class="vsep s1"></i>
        <svg class="eye" width="18" height="16" viewBox="0 0 18 16"><path d="M1 9q8-7 16 0-8 6-16 0z" fill="#ccc" stroke="#111" stroke-width="1.300" /><circle cx="9" cy="9" r="3.300" fill="#111" /><circle cx="8" cy="8" r="1" fill="#fff" /><path d="M2 5l2 2M5 2l1 3.500M9 1v4M13 2l-1 3.500M16 5l-2 2M4 14l1-2M9 15v-2M14 14l-1-2" stroke="#111" stroke-width="1.100" /></svg>
        <span class="lk2">{@render ic('lockopen')}</span>
        <button class="combo layer"><b class="t" use:fit={44}>•Capa 1</b><i class="down"></i></button>
        <span class="t msg" use:fit={621}>No se han seleccionado objetos. Haga clic, Mayús+clic o arrastre para seleccionar los objetos.</span>
        <i class="vsep s2"></i>
        <div class="coords"><span>X:</span><span>6,85</span><span>Y:</span><span>-3,96</span></div>
        <span class="t z" use:fit={11}>Z:</span>{@render spin('1120%', 'zoomf')}
        <span class="t r" use:fit={12}>R:</span>{@render spin('0,00°', 'rotf')}
      </footer>
    </section>
  </div>
</div>

<style>
  :global(body) { margin: 0; overflow: hidden; }
  .defs { position: absolute; }
  .desktop { width: 1920px; height: 1080px; display: flex; flex-direction: column; font: 14.5px/18px "Noto Sans", "Open Sans", sans-serif; color: #4c4c4c; background: #f2f1f0; overflow: hidden; }
  .desktop * { box-sizing: border-box; }
  .t { display: inline-block; white-space: nowrap; flex: none; padding-bottom: 2px; }
  b { font-weight: 600; }
  i { display: block; flex: none; }
  svg { display: block; flex: none; }

  .topbar { height: 27px; flex: none; display: flex; align-items: center; padding: 0 0 1px 12px; background: linear-gradient(#57534a, #403f3a); color: #dfdbd2; font-weight: 600; }
  .mini { margin: 0 6px 0 20px; }
  .down { border: 4.5px solid transparent; border-top: 5px solid #111; border-bottom: 0; }
  .down.light { border-top-color: #d6d3cd; margin-left: 6px; }
  .clock { display: flex; align-items: center; gap: 4px; margin-left: 748px; }
  .dot { width: 8px; height: 8px; border-radius: 50%; background: #d0cdc7; }
  .tray { display: flex; align-items: center; gap: 12.5px; margin-left: auto; padding-right: 16px; }
  .tray .down { margin-left: -1px; }

  .main { display: flex; flex: 1; min-height: 0; }
  .dock { width: 67px; flex: none; background: #66645f; position: relative; display: flex; flex-direction: column; border-right: 1px solid #5b5955; }
  .wall { position: absolute; left: 0; top: 0; filter: blur(1px); }
  .app { height: 64px; width: 67px; display: flex; align-items: center; justify-content: center; position: relative; flex: none; padding-right: 2px; }
  .app.current::before { content: ""; position: absolute; left: 2px; top: 1px; width: 62px; height: 62px; border-radius: 5px; background: #807e7a; }
  .app svg { position: relative; }
  .q { font: 700 35px "Liberation Serif", serif; text-anchor: middle; fill: #fff; }
  .run { position: absolute; left: 1px; top: 29px; width: 6px; height: 6px; border-radius: 50%; background: #e95420; }
  .launcher { margin: auto 0 17px 18px; display: grid; grid-template-columns: repeat(3, 6px); gap: 6px; position: relative; }
  .launcher i { height: 6px; border-radius: 50%; background: #eeeeec; }

  .window { flex: 1; min-width: 0; display: flex; flex-direction: column; }
  .title { height: 28px; flex: none; background: linear-gradient(#3b3a36, #4c4942); color: #dfdbd2; font-weight: 600; display: flex; align-items: center; padding-left: 813px; }
  .wbtns { margin-left: auto; padding-right: 5px; }
  .menubar { height: 24px; flex: none; background: #504c44; color: #dfdbd2; display: flex; gap: 12.6px; padding-left: 6px; align-items: center; }
  .menubar .t, .exp .t { padding-bottom: 0; }

  .toolbar { height: 33px; flex: none; display: flex; align-items: center; }
  .cell30 { width: 30px; display: flex; justify-content: center; }
  .vsep { width: 2px; align-self: stretch; border-left: 1px solid #d9d7d4; background: #fafafa; }
  .lab { margin: 0 5px 0 7px; color: #9a9997; }
  .lab.x { margin-left: 3px; }
  .lab.h { margin-left: 6px; }
  .lk { width: 24px; margin-left: 7px; }

  .spin { height: 31px; display: flex; border: 1px solid #b4b2ae; border-color: #9b9995 #b4b2ae #b4b2ae; border-radius: 5px; background: linear-gradient(#f4f4f3, #fff 40%); flex: none; overflow: hidden; box-shadow: inset 0 1px 0 #d5d3d0; }
  .spin.off { border-color: #c5c3c0; color: #9a9997; background: #f5f5f4; box-shadow: none; }
  .val { flex: 1; padding: 0 0 2px 7px; display: flex; align-items: center; white-space: nowrap; letter-spacing: -.3px; }
  .btn { width: 29px; border-left: 1px solid #d3d1ce; background: #f3f2f1; display: grid; place-items: center; padding: 0 1px 1px 0; }
  .btn:last-child { width: 30px; padding-right: 2px; }
  .minus, .bar { grid-area: 1 / 1; width: 10px; height: 2px; background: #444; }
  .bar { width: 2px; height: 10px; }
  .off .minus, .off .bar { background: #9a9997; }
  .w164 { width: 164px; } .w160 { width: 160px; } .w184 { width: 184px; } .w167 { width: 167px; } .w168 { width: 168px; } .w105 { width: 105px; }

  .combo { font: inherit; color: inherit; height: 31px; width: 56px; flex: none; padding: 0 2px 0 0; display: flex; align-items: center; justify-content: center; gap: 6px; border: 1px solid #b0aeaa; border-bottom-color: #9d9b97; border-radius: 5px; background: linear-gradient(#fff, #ececeb); }
  .toolbar .combo { margin-left: 5px; }
  .toggles { display: flex; gap: 2px; margin-left: 4px; }
  .toggle { width: 28px; height: 31px; display: grid; place-items: center; border: 1px solid #a09e9a; border-radius: 5px; background: #d9d8d6; }

  .body { height: 906px; flex: none; display: flex; }
  .toolbox { width: 38px; flex: none; }
  .tool { height: 36px; width: 38px; display: grid; place-items: center; }
  .toolbox .pressed { height: 34px; width: 36px; margin: 1px; }
  .pressed { border: 1px solid #a19f9b; border-radius: 5px; background: linear-gradient(#cfcecc, #dfdedc); box-shadow: inset 0 0 2px #aaa; }
  .hsep { height: 2px; border-top: 1px solid #d8d6d3; width: 100%; }
  .glyphA { font: 800 28px/22px "Noto Sans", sans-serif; color: #111; border-right: 1px solid #111; padding-right: 1px; height: 23px; }
  .glyphA.small { font-size: 21px; line-height: 18px; border: 0; }
  .glyphT { font: 700 24px/24px "Liberation Serif", serif; color: #111; padding-left: 1px; }

  .workspace { width: 1023px; flex: none; display: grid; grid-template: 888px 18px / 1005px 18px; }
  .canvas { overflow: visible; }
  .ruler path { stroke: #3f3f3f; fill: none; stroke-width: 1; }
  .ruler text { font-size: 9.5px; fill: #5b636b; }
  .ruler .mark { fill: #444; stroke: none; }
  .corner { fill: #f2f1f0; }
  .javi { font: 83.2px "DejaVu Sans", sans-serif; fill: #f00; }
  .vscroll { padding: 1px 1px 0; }
  .pbtn { display: grid; place-items: center; width: 16px; height: 17px; border: 1px solid #999; border-radius: 4px; background: #f8f8f7; }
  .vscroll > i { width: 5px; height: 596px; margin: 102px 0 0 9px; background: #f28e69; border-radius: 1px; }
  .hscroll > i { width: 373px; height: 5px; margin: 10px 0 0 119px; background: #f28e69; }
  .cms { width: 16px; height: 16px; border: 1px solid #c9c7c4; border-radius: 4px; margin: 1px; opacity: .8; }

  .panel { width: 724px; flex: none; border-left: 2px solid #c9c7c4; }
  .phead { height: 25px; display: flex; align-items: center; }
  .pctl { margin-left: auto; margin-right: 8px; }
  .outer { width: 720px; height: 602px; margin-left: 1px; border: 1px solid #c6c4c1; border-radius: 3px; padding: 3px 3px 0; }
  .tabs { display: flex; height: 27px; }
  .tab { display: flex; align-items: center; padding: 0 6.7px; border-right: 1px solid #d3d1ce; }
  .tab.on { border: 1px solid #c3c1be; border-bottom: 0; border-radius: 5px 5px 0 0; background: linear-gradient(#fff, #f2f1f0); padding: 0 7.5px 0 6.5px; }
  .sheet { border: 1px solid #c6c4c1; border-radius: 2px; height: 567px; padding-left: 3px; }
  .r26 { height: 26px; display: flex; align-items: center; }
  .r31 { height: 31px; display: flex; align-items: center; gap: 8px; }
  .r40 { height: 40px; display: flex; align-items: flex-end; padding-bottom: 2px; }
  .list { width: 703px; height: 130px; border: 1px solid #c0bebb; background: #fff; overflow: hidden; color: #3c3c3c; }
  .lrow { height: 23px; display: grid; grid-template-columns: 198px 1fr; align-items: center; padding-left: 3px; }
  .cellt { display: flex; }
  .sel { background: #f07746; color: #fff; }
  .orient { height: 28px; display: flex; align-items: center; }
  .radio { width: 12px; height: 12px; border-radius: 50%; border: 1px solid #bbb; background: #fff; margin: 0 5px 2px 21px; }
  .radio.on { border: 4px solid #dc5c2c; margin-left: 433px; }
  fieldset { margin: 0; padding: 6px 0 0; border: 1px solid #c8c6c3; border-radius: 3px; width: 703px; height: 80px; min-width: 0; }
  fieldset.second { margin-top: 5px; height: 78px; }
  legend { padding: 0; height: 16px; line-height: 14px; margin-left: -1px; }
  legend .t { line-height: 14px; vertical-align: top; }
  .frow { display: flex; align-items: center; gap: 8px; height: 31px; padding-left: 10px; }
  .frow.low { height: 29px; }
  .frow.low .spin { height: 29px; }
  .g38 { margin-left: 30px; } .g18 { margin-left: 10px; } .g11 { margin-left: 3px; }
  .dim { color: #9a9997; }
  .exp { height: 26px; display: flex; align-items: center; padding-left: 10px; }
  .exp i { border: 5px solid transparent; border-left: 5px solid #111; border-right: 0; margin-right: 10px; }
  .cols { display: grid; grid-template-columns: 333px 1fr; padding: 19px 0 0 4px; }
  .left, .right { display: grid; align-content: start; }
  .left { grid-template-rows: 25px 20px 32px 18px 26px; }
  .right { grid-template-rows: 23px 23px 24px 24px 28px; }
  .left > div, .right > div { display: flex; align-items: center; }
  .check { display: flex; align-items: center; padding-left: 6px; gap: 5px; }
  .tick { width: 12px; height: 12px; border: 1px solid #bbb9b6; border-radius: 3px; background: #fff; margin-bottom: 1px; }
  .tick.on { background: #dd5b2b; border: 0; }
  .swatch { width: 44px; height: 22px; margin-left: 8px; border: 1px solid #b0aeaa; border-radius: 4px; background: linear-gradient(#fff, #efeeed); display: grid; place-items: center; }
  .swatch i { width: 33px; height: 12px; }
  .grey { background: #666; }
  .chk { background: linear-gradient(90deg, transparent 50%, #fff 50%), repeating-conic-gradient(#aaa 0 25%, #c8c8c8 0 50%) 0 0 / 12px 12px; }
  .grip { height: 2px; width: 722px; background: #c9c7c4; }

  .commands { width: 38px; flex: none; }
  .more { margin: 9px 0 0 17px; }
  .snaps { width: 30px; flex: none; }
  .snap { height: 28px; display: grid; place-items: center; }
  .snap.pressed { height: 26px; width: 28px; margin: 1px; }

  .palrow { height: 28px; flex: none; display: flex; align-items: center; gap: 12px; }
  .palwrap { width: 1823px; height: 28px; }
  .palette { display: flex; }
  .palette i { width: 19px; height: 13px; }
  .pbar { width: 404px; height: 5px; background: #f28e69; margin-top: 10px; }

  .status { height: 34px; flex: none; display: flex; align-items: center; }
  .style { display: grid; grid-template: 17px 17px / 58px 27px; padding-left: 2px; align-items: center; justify-items: start; }
  .style .t { line-height: 17px; }
  .o { margin: 0 3px 0 3px; }
  .s1 { margin-left: 4px; }
  .eye { margin-left: 8px; }
  .lk2 { margin-left: 9px; }
  .layer { width: 76px; margin: 0 2px 0 3px; }
  .s2 { margin-left: auto; }
  .coords { display: grid; grid-template: 17px 17px / 20px 42px; width: 62px; height: 34px; margin: 0 9px 0 10px; line-height: 16px; letter-spacing: -.3px; }
  .coords span:nth-child(even) { text-align: right; }
  .z { margin-right: 12px; }
  .zoomf { width: 102px; }
  .zoomf .val, .rotf .val { padding: 0 0 2px; justify-content: center; }
  .zoomf .btn, .rotf .btn { width: 22px; }
  .zoomf .btn:last-child, .rotf .btn:last-child { width: 24px; }
  .r { margin: 0 12px 0 11px; }
  .rotf { width: 110px; margin-right: 11px; }
</style>
